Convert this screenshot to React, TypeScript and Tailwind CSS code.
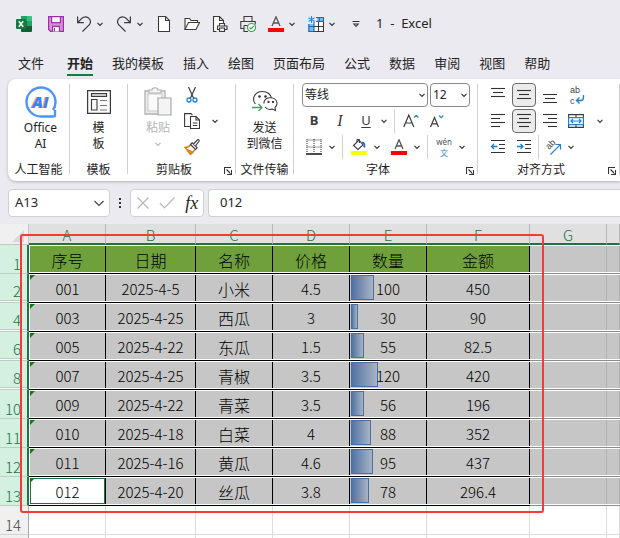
import { useState } from 'react';
import type { ReactNode } from 'react';

interface Row {
  num: number;
  id: string;
  date: string;
  name: string;
  price: string;
  qty: number;
  amount: string;
}

const tabs = ['开始', '我的模板', '插入', '绘图', '页面布局', '公式', '数据', '审阅', '视图', '帮助'];

const headers = ['序号', '日期', '名称', '价格', '数量', '金额'];

const rows: Row[] = [
  { num: 2, id: '001', date: '2025-4-5', name: '小米', price: '4.5', qty: 100, amount: '450' },
  { num: 4, id: '003', date: '2025-4-25', name: '西瓜', price: '3', qty: 30, amount: '90' },
  { num: 6, id: '005', date: '2025-4-22', name: '东瓜', price: '1.5', qty: 55, amount: '82.5' },
  { num: 8, id: '007', date: '2025-4-25', name: '青椒', price: '3.5', qty: 120, amount: '420' },
  { num: 10, id: '009', date: '2025-4-22', name: '青菜', price: '3.5', qty: 56, amount: '196' },
  { num: 11, id: '010', date: '2025-4-18', name: '白菜', price: '4', qty: 88, amount: '352' },
  { num: 12, id: '011', date: '2025-4-16', name: '黄瓜', price: '4.6', qty: 95, amount: '437' },
  { num: 13, id: '012', date: '2025-4-20', name: '丝瓜', price: '3.8', qty: 78, amount: '296.4' },
];

const MAX_QTY = 120;

function Icon({ w = 16, h = 16, children }: { w?: number; h?: number; children: ReactNode }) {
  return (
    <svg width={w} height={h} viewBox={`0 0 ${w} ${h}`} fill="none" stroke="#3b3b3b" strokeWidth="1.1" aria-hidden="true" className="shrink-0">
      {children}
    </svg>
  );
}

function Chevron({ color = '#333' }: { color?: string }) {
  return (
    <Icon w={8} h={8}>
      <path d="M1.5 2.8 4 5.3 6.5 2.8" stroke={color} strokeWidth="1.2" />
    </Icon>
  );
}

function QuickButton({ label, menu, children }: { label: string; menu?: boolean; children: ReactNode }) {
  return (
    <div className="flex items-center gap-1">
      <button type="button" aria-label={label}>{children}</button>
      {menu && (
        <button type="button" aria-label={`${label}选项`}><Chevron /></button>
      )}
    </div>
  );
}

function Tool({ label, active, children }: { label: string; active?: boolean; children: ReactNode }) {
  return (
    <button
      type="button"
      aria-label={label}
      aria-pressed={active}
      className={`flex size-6 shrink-0 items-center justify-center ${active ? 'rounded-[4px] border border-[#6b6b6b] bg-[#ebebeb]' : ''}`}
    >
      {children}
    </button>
  );
}

function Drop({ label }: { label: string }) {
  return (
    <button type="button" aria-label={label} className="flex h-6 w-3 shrink-0 items-center justify-center">
      <Chevron />
    </button>
  );
}

function Sep() {
  return <div className="mt-px h-[90px] w-px shrink-0 bg-[#d1d1d1]" />;
}

function Group({ title, width, launcher, children }: { title: string; width: string; launcher?: boolean; children: ReactNode }) {
  return (
    <section aria-label={title} className={`flex shrink-0 flex-col ${width}`}>
      <div className="h-[79px]">{children}</div>
      <div className="flex h-[15px] items-center text-xs leading-[15px]">
        <span className="flex-1 text-center whitespace-nowrap">{title}</span>
        {launcher && (
          <button type="button" aria-label={`${title}设置`} className="w-[15px] pt-0.5 pl-1">
            <Icon w={8} h={8}>
              <path d="M.5 7V.5H7M2.5 2.5l4 4M7.5 3v4.5H3" stroke="#333" />
            </Icon>
          </button>
        )}
      </div>
    </section>
  );
}

function TitleBar() {
  return (
    <header className="flex h-12 shrink-0 items-center gap-3 px-4">
      <div className="mr-1">
        <Icon>
          <path d="M5 0h6v5H5z" fill="#21a366" stroke="none" />
          <path d="M11 0h4a1 1 0 0 1 1 1v4h-5z" fill="#33c481" stroke="none" />
          <path d="M5 5h6v6H5z" fill="#107c41" stroke="none" />
          <path d="M11 5h5v5h-5z" fill="#21a366" stroke="none" />
          <path d="M5 10h11v5a1 1 0 0 1-1 1H6a1 1 0 0 1-1-1z" fill="#185c37" stroke="none" />
          <rect y="3" width="10" height="10" rx="1" fill="#107c41" stroke="none" />
          <path d="m2.8 5.3 4.4 5.4M7.2 5.3l-4.4 5.4" stroke="#fff" strokeWidth="1.5" />
        </Icon>
      </div>
      <QuickButton label="保存">
        <Icon>
          <path d="M.6.6h14.8v14.8H2.6l-2-2z" fill="#d68fd6" stroke="#9b2fa5" strokeWidth="1.2" />
          <path d="M3.6.6h8.8v6H3.6zM4.6 15.4v-5h6.8v5" fill="#fff" stroke="#9b2fa5" strokeWidth="1.2" />
          <path d="M6.5 12v3.4" stroke="#9b2fa5" />
        </Icon>
      </QuickButton>
      <QuickButton label="撤消" menu>
        <Icon>
          <path d="M1.6.5v6.2h6.2M1.8 6.5 6 2.2c4-3.6 10 .8 8 5.4-.4 1-1 1.5-1.6 2.1L6.5 15.5" strokeWidth="1.2" />
        </Icon>
      </QuickButton>
      <QuickButton label="恢复" menu>
        <Icon>
          <path d="M14.4.5v6.2H8.2M14.2 6.5 10 2.2C6-1.4 0 3 2 7.6c.4 1 1 1.5 1.6 2.1l5.9 5.8" strokeWidth="1.2" />
        </Icon>
      </QuickButton>
      <QuickButton label="新建">
        <Icon>
          <path d="M2.5.5h7l4 4v11h-11z" fill="#fff" />
          <path d="M9.5.5v4h4" />
        </Icon>
      </QuickButton>
      <QuickButton label="打开">
        <Icon>
          <path d="M1 13.5v-11h4.5L7 4.5h6.5v2" fill="#fff" />
          <path d="M1 13.5 4.5 6.5h11l-3.5 7z" fill="#fff" />
        </Icon>
      </QuickButton>
      <QuickButton label="打印预览">
        <Icon>
          <path d="M4.5 15.5h-3V.5h6l4 4v3" fill="#fff" />
          <path d="M7.5.5v4h4M7.5 10V7.5h5V10M7.5 13.5h-2V10H15v3.5h-2.5M7.5 12h5v3.5h-5z" />
        </Icon>
      </QuickButton>
      <QuickButton label="快速打印">
        <Icon>
          <path d="M4 5.5v-5h8v5M4 12.5H.8v-7h14.4v3M4 9.5h4M4 9.5v6h4" />
          <circle cx="11.5" cy="11.5" r="4" fill="#fff" stroke="#3fa45b" strokeWidth="1.2" />
          <path d="m9.5 11.5 1.5 1.5 2.7-3" stroke="#3fa45b" strokeWidth="1.2" />
        </Icon>
      </QuickButton>
      <QuickButton label="字体颜色" menu>
        <Icon>
          <path d="M4 10 8 .8 12 10M5.3 7h5.4" stroke="#555" strokeWidth="1.3" />
          <path d="M0 12h16v4H0z" fill="#f00" stroke="none" />
        </Icon>
      </QuickButton>
      <QuickButton label="表格" menu>
        <Icon>
          <path d="M9 1h6.5v5H9zM1 10.5h5v5H1z" fill="#7fb9e6" stroke="none" />
          <path d="M6 6h9.5v9.5H6z" fill="#fff" stroke="none" />
          <path d="M.8 8H6v2.5H.8z" fill="#7fb9e6" stroke="none" />
          <path d="M15.5 5.5v10H6M6 10.5h9.5M10.5 5.5v10" />
          <path d="M8 1.5h7.5v4H8M11.5 1.5v4M6 15.5H.8V8M6 5.5v10M.8 10.5H6" stroke="#0f6cbd" />
          <path d="M3.5 0v7M.5 1.7l6 3.6M6.5 1.7l-6 3.6" stroke="#2b88d8" />
        </Icon>
      </QuickButton>
      <button type="button" aria-label="自定义快速访问工具栏" className="ml-1">
        <Icon w={8} h={8}>
          <path d="M.5 1.5h7M1.8 4 4 6.5 6.2 4z" stroke="#333" />
        </Icon>
      </button>
      <h1 className="ml-1 text-[13px] whitespace-pre">1  -  Excel</h1>
    </header>
  );
}

function TabBar() {
  return (
    <nav className="flex h-[31px] shrink-0 gap-[19px] px-[18px] pt-[5px] text-[13px] leading-5">
      <a href="#file" className="mr-1 whitespace-nowrap">文件</a>
      {tabs.map(tab => (
        <a
          key={tab}
          href={`#${tab}`}
          className={`h-[23px] whitespace-nowrap ${tab === '开始' ? 'border-b-2 border-[#107c41] font-bold' : ''}`}
        >
          {tab}
        </a>
      ))}
    </nav>
  );
}

function AlignIcon({ lines, top = 0 }: { lines: [number, number][]; top?: number }) {
  return (
    <Icon>
      {lines.map(([x, w], i) => (
        <path key={i} d={`M${x} ${top + i * 4 + 1.5}h${w}`} stroke="#333" />
      ))}
    </Icon>
  );
}

function FontGroup() {
  return (
    <div className="flex flex-col gap-0.5 pl-2">
      <div className="flex gap-0.5">
        <div className="relative">
          <select aria-label="字体名称" className="block h-6 w-[126px] appearance-none rounded-[4px] border border-[#8a8a8a] bg-white pl-0.5 text-xs">
            <option>等线</option>
          </select>
          <span className="pointer-events-none absolute top-2 right-0.5"><Chevron /></span>
        </div>
        <div className="relative">
          <select aria-label="字号" className="block h-6 w-10 appearance-none rounded-[4px] border border-[#8a8a8a] bg-white pl-0.5 text-xs">
            <option>12</option>
          </select>
          <span className="pointer-events-none absolute top-2 right-0.5"><Chevron /></span>
        </div>
      </div>
      <div className="flex items-center">
        <div className="flex gap-0.5 text-[13px] text-[#3b3b3b]">
          <Tool label="加粗"><b>B</b></Tool>
          <Tool label="倾斜"><i className="font-['Liberation_Serif',serif] text-base">I</i></Tool>
          <Tool label="下划线"><u className="underline-offset-2">U</u></Tool>
        </div>
        <Drop label="下划线选项" />
        <div className="mx-1 h-6 w-px bg-[#d1d1d1]" />
        <div className="flex gap-0.5">
          <Tool label="增大字号">
            <Icon>
              <path d="M.8 14 5.8 2l5 12M2.6 10H9" strokeWidth="1.2" />
              <path d="m11 4.5 2.2-2.2 2.2 2.2" stroke="#2b88d8" strokeWidth="1.2" />
            </Icon>
          </Tool>
          <Tool label="减小字号">
            <Icon>
              <path d="M1.5 14 5.5 4.5l4 9.500M3 10.8h5" strokeWidth="1.2" />
              <path d="m10 2.5 2.2 2.2 2.2-2.2" stroke="#2b88d8" strokeWidth="1.2" />
            </Icon>
          </Tool>
        </div>
      </div>
      <div className="flex items-center">
        <Tool label="边框">
          <Icon>
            <path d="M.5 1h15M.5 8h15M1 0v13M8 0v13M15 0v13" strokeDasharray="1 1" />
            <path d="M0 15h16" stroke="#111" strokeWidth="1.5" />
          </Icon>
        </Tool>
        <Drop label="边框选项" />
        <div className="mx-1 h-6 w-px bg-[#d1d1d1]" />
        <Tool label="填充颜色">
          <Icon>
            <path d="M2.5 6.5 8 1l4 5-5 4.5z" fill="#fff" />
            <path d="M6 3V1.5a1.2 1.2 0 0 1 2.4 0V4" />
            <path d="M11 3.5c2 0 2.8 1.5 2.3 5" stroke="#1f6fb2" strokeWidth="1.8" />
            <path d="M0 12h16v4H0z" fill="#ff0" stroke="none" />
          </Icon>
        </Tool>
        <Drop label="填充颜色选项" />
        <div className="w-1" />
        <Tool label="字体颜色">
          <Icon>
            <path d="M4 10 8 .8 12 10M5.3 7h5.4" stroke="#555" strokeWidth="1.3" />
            <path d="M0 12h16v4H0z" fill="#f00" stroke="none" />
          </Icon>
        </Tool>
        <Drop label="字体颜色选项" />
        <div className="mx-1 h-6 w-px bg-[#d1d1d1]" />
        <Tool label="拼音指南">
          <span className="flex flex-col items-center text-[8px] leading-[11px] text-[#555]">
            wén
            <span className="text-[8px] text-[#2b88d8]">文</span>
          </span>
        </Tool>
        <Drop label="拼音选项" />
      </div>
    </div>
  );
}

function AlignGroup() {
  return (
    <div className="flex flex-col gap-0.5 pl-2">
      <div className="flex gap-0.5">
        <Tool label="顶端对齐"><AlignIcon lines={[[1, 14], [3, 10], [1, 14]]} /></Tool>
        <Tool label="垂直居中" active><AlignIcon top={2} lines={[[1, 14], [3, 10], [1, 14]]} /></Tool>
        <Tool label="底端对齐"><AlignIcon top={6} lines={[[1, 14], [3, 10], [1, 14]]} /></Tool>
        <Tool label="自动换行">
          <Icon w={24} h={24}>
            <text x="6" y="10" fontFamily="Liberation Sans, sans-serif" fontSize="9" fill="#444" stroke="none">ab</text>
            <text x="6" y="21" fontFamily="Liberation Sans, sans-serif" fontSize="9" fill="#444" stroke="none">c</text>
            <path d="M19.5 12v2.500c0 2-1 3-3 3h-4M15.5 14.5l-3 3 3 3" stroke="#1f82d0" strokeWidth="1.4" />
          </Icon>
        </Tool>
      </div>
      <div className="flex gap-0.5">
        <Tool label="左对齐"><AlignIcon lines={[[1, 14], [1, 9], [1, 14], [1, 9]]} /></Tool>
        <Tool label="水平居中" active><AlignIcon lines={[[1, 14], [3, 10], [1, 14], [3, 10]]} /></Tool>
        <Tool label="右对齐"><AlignIcon lines={[[1, 14], [6, 9], [1, 14], [6, 9]]} /></Tool>
        <Tool label="合并后居中">
          <Icon>
            <path d="M.6 1.6h14.8v12.8H.6zM8 1.6v3M8 11.5v3" />
            <path d="M.6 4.6h14.8v7H.6z" fill="#fff" stroke="#1f82d0" strokeWidth="1.2" />
            <path d="M3 8h10M5 6 3 8l2 2M11 6l2 2-2 2" stroke="#1f82d0" strokeWidth="1.2" />
          </Icon>
        </Tool>
        <div className="w-0.5" />
        <Drop label="合并选项" />
      </div>
      <div className="flex items-center">
        <div className="flex gap-0.5">
          <Tool label="减少缩进量">
            <Icon>
              <path d="M1 1.5h14M9 5.5h6M9 9.5h6M1 13.5h14" stroke="#333" />
              <path d="M1.5 7.5h6M4 5 1.5 7.5 4 10" stroke="#1f82d0" strokeWidth="1.3" />
            </Icon>
          </Tool>
          <Tool label="增加缩进量">
            <Icon>
              <path d="M1 1.5h14M9 5.5h6M9 9.5h6M1 13.5h14" stroke="#333" />
              <path d="M1 7.5h6M4.5 5 7 7.5 4.5 10" stroke="#1f82d0" strokeWidth="1.3" />
            </Icon>
          </Tool>
        </div>
        <div className="mx-0.5 h-6 w-px bg-[#d1d1d1]" />
        <Tool label="方向">
          <Icon w={24} h={24}>
            <text x="8" y="15" transform="rotate(-45 8 15)" fontFamily="Liberation Sans, sans-serif" fontSize="9" fill="#444" stroke="none">ab</text>
            <path d="M9.5 19.500 19.3 9.7M14.5 9.5h5v5" stroke="#1f82d0" strokeWidth="1.2" />
          </Icon>
        </Tool>
        <Drop label="方向选项" />
      </div>
    </div>
  );
}

function Ribbon() {
  return (
    <div className="ml-2 flex h-[102px] shrink-0 rounded-l-lg bg-white py-1 shadow-[0_1px_3px_rgba(0,0,0,0.25)]">
      <Group title="人工智能" width="w-[61px]">
        <button type="button" className="flex w-full flex-col items-center pl-1 text-xs leading-4">
          <span className="flex h-[37px] items-center">
            <Icon w={32} h={32}>
              <path d="M30.500 16A14.500 14.500 0 1 0 16 30.500h12.500a1.500 1.500 0 0 0 1.500-1.500v-5" stroke="#4c94f8" strokeWidth="2.4" strokeLinejoin="round" fill="#fff" />
              <path d="M30.500 16c0 3.500-1 6-2.500 8" stroke="#4c94f8" strokeWidth="2.4" />
              <text x="14.500" y="21.500" textAnchor="middle" fontFamily="Open Sans, sans-serif" fontSize="16" fontWeight="800" fontStyle="italic" fill="#e9a25a" stroke="none">AI</text>
              <text x="15.500" y="21.500" textAnchor="middle" fontFamily="Open Sans, sans-serif" fontSize="16" fontWeight="800" fontStyle="italic" fill="#3f7ff5" stroke="none">AI</text>
            </Icon>
          </span>
          <span>Office</span>
          <span>AI</span>
        </button>
      </Group>
      <Sep />
      <Group title="模板" width="w-[57px]">
        <button type="button" className="flex w-full flex-col items-center text-xs leading-4">
          <span className="flex h-[37px] items-center">
            <Icon w={24} h={24}>
              <path d="M.6.6h22.8v22.8H.6z" fill="#fafafa" strokeWidth="1.2" />
              <path d="M4.5 3.5h15v3h-15z" fill="#c8c8c8" />
              <path d="M4.5 9.5H10V20H4.5z" />
              <path d="M13 10.5h7M13 15.5h7M13 20h7" stroke="#777" />
            </Icon>
          </span>
          <span>模</span>
          <span>板</span>
        </button>
      </Group>
      <Sep />
      <Group title="剪贴板" width="w-[107px]" launcher>
        <div className="flex">
          <button type="button" className="flex w-14 flex-col items-center pl-1 text-xs leading-4 text-[#b3b3b3]">
            <span className="flex h-[37px] items-center">
              <Icon w={28} h={32}>
                <path d="M1 5h20v23H1z" fill="#ececec" stroke="#b0b0b0" strokeWidth="1.3" />
                <path d="M4 8h14v17H4z" fill="#fafafa" stroke="#c9c9c9" />
                <path d="M5 7V4h3c0-3 6-3 6 0h3v3z" fill="#f4f4f4" stroke="#b0b0b0" />
                <path d="M14 12h13v17H14z" fill="#f4f4f4" stroke="#a8a8a8" strokeWidth="1.2" />
              </Icon>
            </span>
            <span>粘贴</span>
            <span className="pt-1"><Chevron color="#b3b3b3" /></span>
          </button>
          <div className="flex flex-col gap-0.5">
            <button type="button" aria-label="剪切" className="flex h-6 items-center">
              <Icon>
                <path d="M4.5 0l5 11M11.5 0l-5 11" strokeWidth="1.2" />
                <circle cx="5" cy="13" r="2" stroke="#1f82d0" strokeWidth="1.3" />
                <circle cx="11" cy="13" r="2" stroke="#1f82d0" strokeWidth="1.3" />
              </Icon>
            </button>
            <div className="flex h-6 items-center gap-[11px]">
              <button type="button" aria-label="复制">
                <Icon>
                  <path d="M6 13.5H.6V.6H7l1.5 1.5" />
                  <path d="M6.5 3.5H12L15.5 7v8.500h-9z" fill="#fff" />
                  <path d="M12 3.5V7h3.5M8.8 10h4.5M8.8 12.5h4.5" />
                </Icon>
              </button>
              <button type="button" aria-label="复制选项"><Chevron /></button>
            </div>
            <button type="button" aria-label="格式刷" className="flex h-6 items-center">
              <Icon>
                <path d="M1 8.5c2.5 0 4.5-1 6-3l4.5 4.5c-1.5 2-3 4-5 5.5z" fill="#fff" stroke="#e07a10" strokeWidth="1.3" />
                <path d="m3 10.5 5 2-1.8 2.5z" fill="#f0953a" stroke="#e07a10" />
                <path d="m6.5 5.5 1.7-1.7 5 5-1.7 1.7z" fill="#fff" />
                <path d="m9.5 5 4-4.2c1.2-.6 2 .4 1.5 1.5L11.500 6.800" fill="#fff" />
              </Icon>
            </button>
          </div>
        </div>
      </Group>
      <Sep />
      <Group title="文件传输" width="w-[57px]">
        <button type="button" className="flex w-full flex-col items-center text-xs leading-4">
          <span className="flex h-[37px] items-center">
            <Icon w={26} h={24}>
              <path d="M3.5 14C-1 8.5 3 1.5 10.5 1.5c5 0 8.5 3 9 6.5" />
              <path d="M12 13.5c-1-7 11.5-8 13-1 .3 2-.7 3.8-2 5l.5 3-3-1.5c-3 1-6 0-7.5-2" />
              <circle cx="7.5" cy="6.5" r=".8" fill="#333" />
              <circle cx="13.5" cy="6.5" r=".8" fill="#333" />
              <circle cx="16.5" cy="12" r=".6" fill="#333" />
              <circle cx="21" cy="12" r=".6" fill="#333" />
              <path d="M0 17.5h10M6.5 14l3.5 3.5L6.5 21" stroke="#4a9e63" strokeWidth="1.3" />
            </Icon>
          </span>
          <span>发送</span>
          <span>到微信</span>
        </button>
      </Group>
      <Sep />
      <Group title="字体" width="w-[183px]" launcher>
        <FontGroup />
      </Group>
      <Sep />
      <Group title="对齐方式" width="w-[141px]" launcher>
        <AlignGroup />
      </Group>
      <Sep />
    </div>
  );
}

function FormulaBar() {
  const [value, setValue] = useState('012');

  return (
    <div className="mt-2 mb-[7px] flex h-7 shrink-0 items-stretch pl-2 text-[13px]">
      <div className="flex w-[102px] items-center rounded-[4px] border border-[#d1d1d1] bg-white pr-1">
        <input aria-label="名称框" defaultValue="A13" className="w-full min-w-0 bg-transparent pl-1.5 outline-none" />
        <button type="button" aria-label="名称列表">
          <Icon w={12} h={12}>
            <path d="M1.5 4 6 8.5 10.5 4" stroke="#444" strokeWidth="1.2" />
          </Icon>
        </button>
      </div>
      <div className="flex w-5 items-center justify-center">
        <Icon w={4} h={12}>
          <path d="M1 1h2v2H1zM1 5h2v2H1zM1 9h2v2H1z" fill="#333" stroke="none" />
        </Icon>
      </div>
      <div className="mr-1 flex w-[74px] items-center justify-around rounded-[4px] border border-[#d1d1d1] bg-white">
        <button type="button" aria-label="取消">
          <Icon w={14} h={14}><path d="m1.5 1.5 11 11M12.5 1.5l-11 11" stroke="#b5b5b5" /></Icon>
        </button>
        <button type="button" aria-label="输入">
          <Icon><path d="m.8 8 4.7 5L15.5 2.5" stroke="#b5b5b5" /></Icon>
        </button>
        <button type="button" aria-label="插入函数" className="font-['Liberation_Serif',serif] text-lg leading-5 italic">fx</button>
      </div>
      <input
        aria-label="编辑栏"
        value={value}
        onChange={e => setValue(e.target.value)}
        className="min-w-0 flex-1 rounded-l-[4px] border border-r-0 border-[#d1d1d1] bg-white pl-[11px] outline-none"
      />
    </div>
  );
}

function RowHead({ num, hiddenBelow }: { num: number; hiddenBelow?: boolean }) {
  return (
    <th scope="row" className="border-r-2 border-b border-r-[#217346] border-b-[#b9cfc4] bg-[#d3f0e0] p-0 font-light text-[#217346]">
      <div className={`flex items-end justify-end pr-1.5 leading-[18px] ${hiddenBelow ? 'h-[27px] border-b border-[#b9cfc4]' : 'h-7'}`}>{num}</div>
      {hiddenBelow && <div className="h-px bg-white" />}
    </th>
  );
}

function Cell({ kind = 'data', first, children }: { kind?: 'data' | 'head' | 'blank'; first?: boolean; children?: ReactNode }) {
  const fill = kind === 'head' ? 'bg-[#70a03c] border-black' : kind === 'data' ? 'bg-[#c6c6c6] border-black' : 'bg-[#c6c6c6] border-[#b0b0b0]';
  return (
    <td className={`border-b p-0 ${kind === 'blank' ? 'border-[#8c8c8c]' : 'border-black'}`}>
      <div className={`border-y border-white ${first ? 'border-l' : ''}`}>
        <div className={`relative flex h-[26px] items-center justify-center border-r pt-0.5 ${fill}`}>{children}</div>
      </div>
    </td>
  );
}

function ErrorMark() {
  return <span className="absolute top-0 left-0 size-0 border-t-[5px] border-r-[5px] border-t-[#107c10] border-r-transparent" />;
}

function Sheet() {
  return (
    <div className="relative min-h-0 flex-1 overflow-hidden bg-white font-['Noto_Sans_CJK_SC',sans-serif]">
      <table className="w-full table-fixed border-separate border-spacing-0 text-[15px] leading-5 font-light text-black">
        <colgroup>
          <col className="w-[29px]" />
          <col className="w-[77px]" />
          <col className="w-[90px]" />
          <col className="w-[77px]" />
          <col className="w-[77px]" />
          <col className="w-[77px]" />
          <col className="w-[103px]" />
          <col className="w-[77px]" />
          <col />
        </colgroup>
        <thead>
          <tr className="h-[21px]">
            <td className="border-r border-b border-[#c6c6c6] bg-[#f0f0f0] p-0">
              <div className="flex justify-end pt-1 pr-1">
                <Icon w={12} h={12}><path d="M12 0v12H0z" fill="#d9d9d9" stroke="none" /></Icon>
              </div>
            </td>
            {['A', 'B', 'C', 'D', 'E', 'F', 'G', ''].map(col => (
              <th key={col} scope="col" className="border-r border-b-2 border-r-[#b8b8b8] border-b-[#217346] bg-[#e0e0e0] p-0 font-light text-[#217346]">
                <div className="flex h-[19px] items-end justify-center leading-[17px]">{col}</div>
              </th>
            ))}
          </tr>
        </thead>
        <tbody>
          <tr>
            <RowHead num={1} />
            {headers.map((text, i) => (
              <Cell key={text} kind="head" first={i === 0}><span className="text-base leading-5">{text}</span></Cell>
            ))}
            <Cell kind="blank" />
            <Cell kind="blank" />
          </tr>
          {rows.map(row => (
            <tr key={row.num}>
              <RowHead num={row.num} hiddenBelow={row.num < 10} />
              <Cell first>
                {row.num === 13 ? (
                  <span className="absolute inset-0 flex items-center justify-center border border-[#217346] bg-white pt-0.5">{row.id}</span>
                ) : (
                  row.id
                )}
                <ErrorMark />
              </Cell>
              <Cell>{row.date}</Cell>
              <Cell><span className="text-base leading-5">{row.name}</span></Cell>
              <Cell>{row.price}</Cell>
              <Cell>
                <span
                  className="absolute top-0 left-px h-[25px] border border-[#4a6fa5] bg-linear-to-r from-[#5273a3] to-[#a9b3c3]"
                  style={{ width: `${(row.qty / MAX_QTY) * 36}%` }}
                />
                <span className="relative">{row.qty}</span>
              </Cell>
              <Cell>{row.amount}</Cell>
              <Cell kind="blank" />
              <Cell kind="blank" />
            </tr>
          ))}
          {['14', ''].map(num => (
            <tr key={num}>
              <th scope="row" className="border-r border-b border-r-[#a6a6a6] border-b-[#d4d4d4] bg-[#f0f0f0] p-0 font-light text-[#444]">
                <div className="flex h-7 items-end justify-end pr-[7px] leading-[18px]">{num}</div>
              </th>
              {[0, 1, 2, 3, 4, 5, 6, 7].map(i => (
                <td key={i} className="border-r border-b border-[#dcdcdc] p-0" />
              ))}
            </tr>
          ))}
        </tbody>
      </table>
      {/* highlighted range */}
      <div className="pointer-events-none absolute top-[10px] left-5 h-[279px] w-[524px] rounded-[3px] border-2 border-[#fb3838]" />
    </div>
  );
}

export default function App() {
  return (
    <main className="flex h-screen flex-col overflow-hidden bg-[#ebeaf0] font-['Noto_Sans','Noto_Sans_CJK_SC',sans-serif] text-[#242424]">
      <TitleBar />
      <TabBar />
      <Ribbon />
      <FormulaBar />
      <Sheet />
    </main>
  );
}
